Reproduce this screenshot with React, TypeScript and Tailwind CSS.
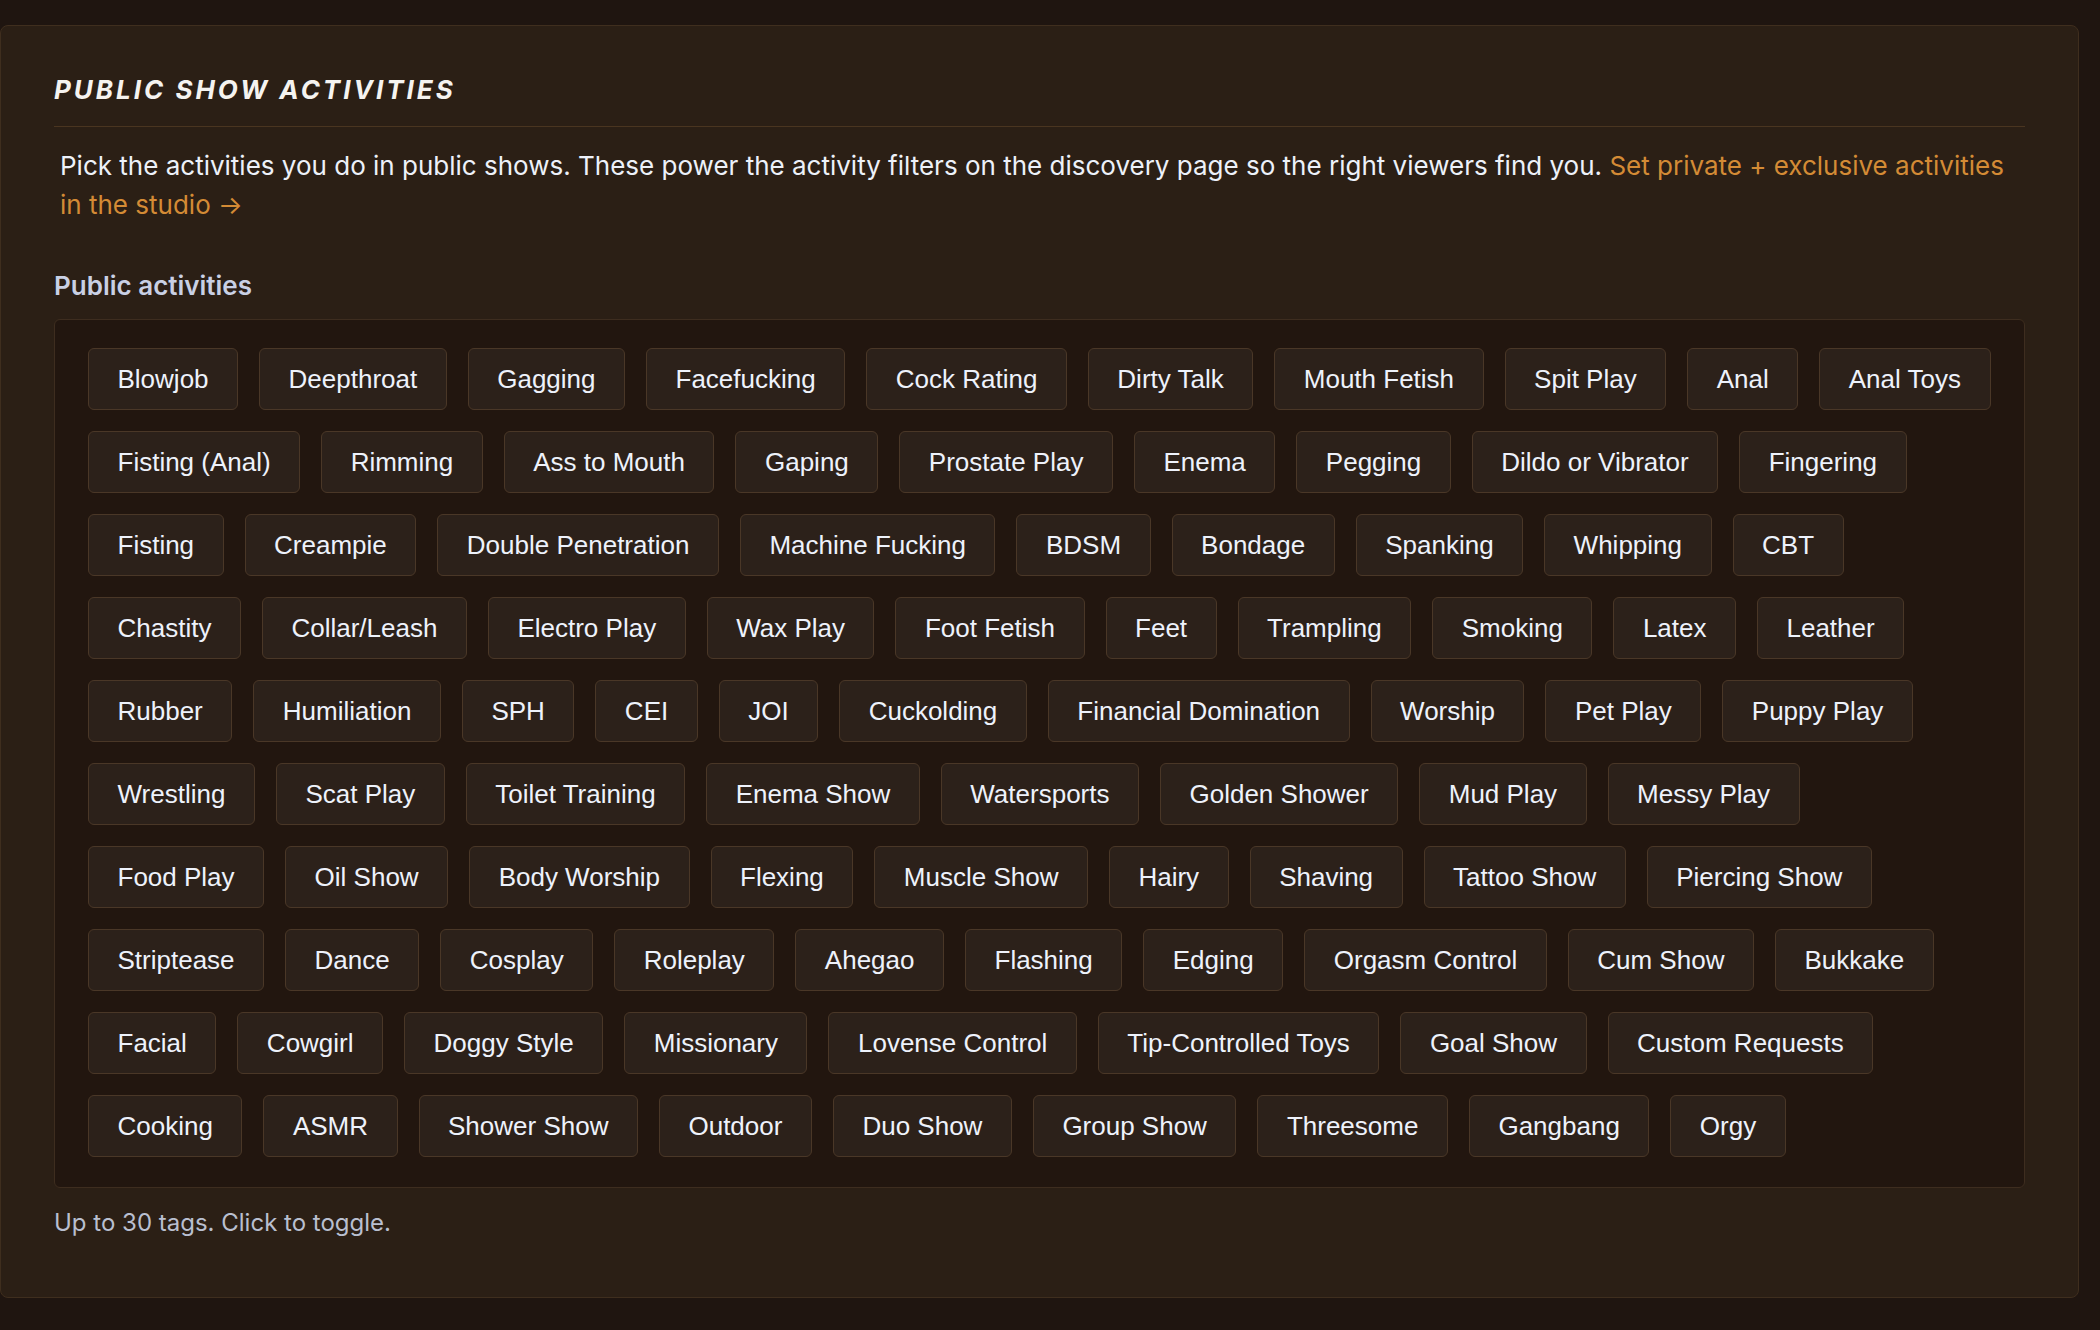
import { useState } from "react";

// tag groups, one line each
const activityRows = [
    ["Blowjob", "Deepthroat", "Gagging", "Facefucking", "Cock Rating", "Dirty Talk", "Mouth Fetish", "Spit Play", "Anal", "Anal Toys"],
    ["Fisting (Anal)", "Rimming", "Ass to Mouth", "Gaping", "Prostate Play", "Enema", "Pegging", "Dildo or Vibrator", "Fingering"],
    ["Fisting", "Creampie", "Double Penetration", "Machine Fucking", "BDSM", "Bondage", "Spanking", "Whipping", "CBT"],
    ["Chastity", "Collar/Leash", "Electro Play", "Wax Play", "Foot Fetish", "Feet", "Trampling", "Smoking", "Latex", "Leather"],
    ["Rubber", "Humiliation", "SPH", "CEI", "JOI", "Cuckolding", "Financial Domination", "Worship", "Pet Play", "Puppy Play"],
    ["Wrestling", "Scat Play", "Toilet Training", "Enema Show", "Watersports", "Golden Shower", "Mud Play", "Messy Play"],
    ["Food Play", "Oil Show", "Body Worship", "Flexing", "Muscle Show", "Hairy", "Shaving", "Tattoo Show", "Piercing Show"],
    ["Striptease", "Dance", "Cosplay", "Roleplay", "Ahegao", "Flashing", "Edging", "Orgasm Control", "Cum Show", "Bukkake"],
    ["Facial", "Cowgirl", "Doggy Style", "Missionary", "Lovense Control", "Tip-Controlled Toys", "Goal Show", "Custom Requests"],
    ["Cooking", "ASMR", "Shower Show", "Outdoor", "Duo Show", "Group Show", "Threesome", "Gangbang", "Orgy"],
];

function ActivityTag({ label, active, onToggle }: { label: string; active: boolean; onToggle: () => void }) {
    return (
        <button
            type="button"
            onClick={onToggle}
            className={
                active
                    ? "h-[62px] px-[28.5px] rounded-[6px] border border-[#d98c32] bg-[#3a2814] text-[26px] leading-none whitespace-nowrap text-[#f0b467] font-['Liberation_Sans',Arial,sans-serif]"
                    : "h-[62px] px-[28.5px] rounded-[6px] border border-[#4a3727] bg-[#2c211a] text-[26px] leading-none whitespace-nowrap text-[#eef2fb] font-['Liberation_Sans',Arial,sans-serif]"
            }
        >
            {label}
        </button>
    );
}

export default function App() {
    const [selected, setSelected] = useState<string[]>([]);

    const toggle = (name: string) => {
        setSelected((prev) =>
            prev.includes(name) ? prev.filter((n) => n !== name) : prev.length >= 30 ? prev : [...prev, name]
        );
    };

    return (
        <div className="min-h-screen bg-[#1f1510] pt-[25px] pr-[21px] font-['Inter',sans-serif]">
            <section className="rounded-[8px] border border-[#3f2e1e] bg-[#2b1f15] px-[53px] pt-[49px] pb-[58px]">
                <h2 className="border-b border-[#4a3520] pb-[21px] text-[26px] leading-[30px] font-bold italic uppercase tracking-[0.115em] text-[#f5f3f0]">
                    Public Show Activities
                </h2>

                <p className="mt-[19px] px-[6px] text-[26px] leading-[39px] text-[#edf1f9]">
                    Pick the activities you do in public shows. These power the activity filters on the discovery page so the right viewers find you.{" "}
                    <a href="#" className="text-[#d48b35]">
                        Set private + exclusive activities in the studio →
                    </a>
                </p>

                <h3 className="mt-[46px] text-[26px] leading-[32px] font-semibold text-[#c9d0e4]">Public activities</h3>

                <div className="mt-[17px] rounded-[6px] border border-[#3e2d1f] bg-[#22160f] pt-[28px] pb-[30px] px-[33px]">
                    <div className="flex flex-col gap-[21px]">
                        {activityRows.map((row, i) => (
                            <div key={i} className="flex gap-[21px]">
                                {row.map((name) => (
                                    <ActivityTag
                                        key={name}
                                        label={name}
                                        active={selected.includes(name)}
                                        onToggle={() => toggle(name)}
                                    />
                                ))}
                            </div>
                        ))}
                    </div>
                </div>

                <p className="mt-[19px] text-[24px] leading-[32px] text-[#b9bfd0]">Up to 30 tags. Click to toggle.</p>
            </section>
        </div>
    );
}
